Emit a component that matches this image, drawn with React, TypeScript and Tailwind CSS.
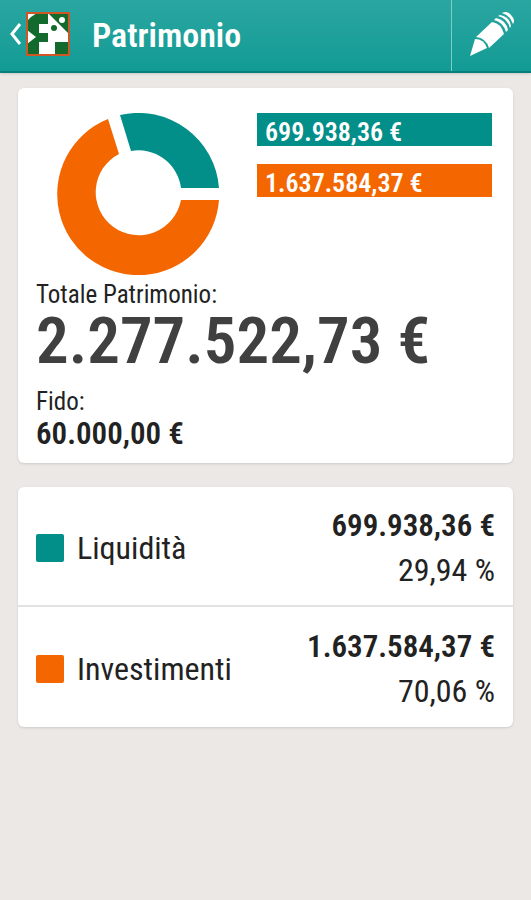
import React from 'react';

const entries = [
  {
    id: 'liquidita',
    label: 'Liquidità',
    amount: '699.938,36 €',
    share: '29,94 %',
    color: 'bg-[#028e89]',
  },
  {
    id: 'investimenti',
    label: 'Investimenti',
    amount: '1.637.584,37 €',
    share: '70,06 %',
    color: 'bg-[#f46600]',
  },
];

const Logo = () => (
  <svg viewBox="0 0 44 44" className="size-11" aria-hidden="true">
    <rect x="1" y="1" width="42" height="42" fill="#126b2c" />
    <g fill="#fff">
      <path d="M1 1 H11 L5 5 L1 9 Z" />
      <path d="M1 18 L10 25 L1 32 Z" />
      <path d="M13 12 H23 V21 H13 Z" />
      <path d="M22 1 L43 22 V30 H29 V43 H13 V30 H22 Z" />
      <circle cx="36" cy="8" r="3" />
    </g>
    <circle cx="28" cy="16" r="3" fill="#126b2c" />
    <rect x="1" y="1" width="42" height="42" fill="none" stroke="#cf5727" strokeWidth="2" />
  </svg>
);

const Pencil = () => (
  <svg viewBox="0 0 46 46" className="size-[46px]" fill="#fff" aria-hidden="true">
    <path d="M1 45 L6 28 Q15 28 18 37 Z" />
    <path d="M7 26 L23 11 Q32 12 35 23 L20 37 Q17 27 7 26 Z" />
    <path d="M25 9 L27 7 Q37 9 39 19 L37 21 Q34 11 25 9 Z" />
    <path d="M29 5 L31 4 Q41 6 42 15 L41 17 Q38 7 29 5 Z" />
    <path d="M33 2 Q38 -1 42 4 Q47 9 44 13 Q41 4 33 2 Z" />
  </svg>
);

const Donut = () => (
  <svg
    viewBox="0 0 162 162"
    className="size-[162px] shrink-0"
    role="img"
    aria-label="Liquidità 29,94 %, Investimenti 70,06 %"
  >
    <path d="M63 2 A81 81 0 0 1 162 75 H124 A43 43 0 0 0 74 38 Z" fill="#028e89" />
    <path d="M162 87 A81 81 0 1 1 51 6 L62 41 A43 43 0 1 0 124 87 Z" fill="#f46600" />
  </svg>
);

const App = () => {
  return (
    <div className="min-h-screen bg-[#ebe8e5] font-['Roboto_Condensed','Liberation_Sans_Narrow',Roboto,sans-serif] text-[#222]">
      <header className="flex h-[73px] items-stretch border-b-2 border-[#087f7a] bg-linear-to-b from-[#2aa6a1] to-[#109b94] text-white shadow-sm">
        <button type="button" aria-label="Indietro" className="flex items-center pb-1 pl-2">
          <svg viewBox="0 0 16 24" className="h-6 w-4" fill="none" stroke="#fff" strokeWidth="3" aria-hidden="true">
            <path d="M12 2 L4 12 L12 22" />
          </svg>
          <span className="ml-[2px]">
            <Logo />
          </span>
        </button>
        <h1 className="flex flex-1 items-center pl-[22px] text-[34px] font-semibold">Patrimonio</h1>
        <button
          type="button"
          aria-label="Modifica"
          className="flex w-20 items-center justify-center border-l border-[#7fcbc7] pb-1"
        >
          <Pencil />
        </button>
      </header>

      <main className="flex flex-col gap-6 px-[18px] pt-[15px]">
        <section className="rounded-md bg-white px-[18px] pt-[25px] pb-[14px] shadow-sm">
          <div className="flex items-start gap-[38px] pr-[3px] pl-[21px]">
            <Donut />
            <div className="flex flex-1 flex-col gap-[18px]">
              {entries.map(({ id, amount, color }) => (
                <p key={id} className={`h-[33px] pt-1 pl-2 text-[26px] leading-[30px] font-semibold text-white ${color}`}>
                  {amount}
                </p>
              ))}
            </div>
          </div>
          <p className="mt-1 text-[25px] leading-8">Totale Patrimonio:</p>
          <p className="text-[65px] leading-[60px] font-semibold whitespace-nowrap text-[#404040]">2.277.522,73 €</p>
          <p className="mt-[15px] text-[25px] leading-8">Fido:</p>
          <p className="text-[31px] leading-[31px] font-semibold">60.000,00 €</p>
        </section>

        <ul className="rounded-md bg-white shadow-sm">
          {entries.map(({ id, label, amount, share, color }) => (
            <li
              key={id}
              className="flex h-[120px] items-center px-[18px] pt-1 not-last:border-b-2 not-last:border-[#e2e2e2]"
            >
              <span className={`size-7 rounded-xs ${color}`} />
              <span className="ml-[13px] flex-1 text-[32px]">{label}</span>
              <span className="flex flex-col text-right leading-[44px]">
                <strong className="text-[31px] font-semibold">{amount}</strong>
                <span className="text-[32px]">{share}</span>
              </span>
            </li>
          ))}
        </ul>
      </main>
    </div>
  );
};

export default App;
